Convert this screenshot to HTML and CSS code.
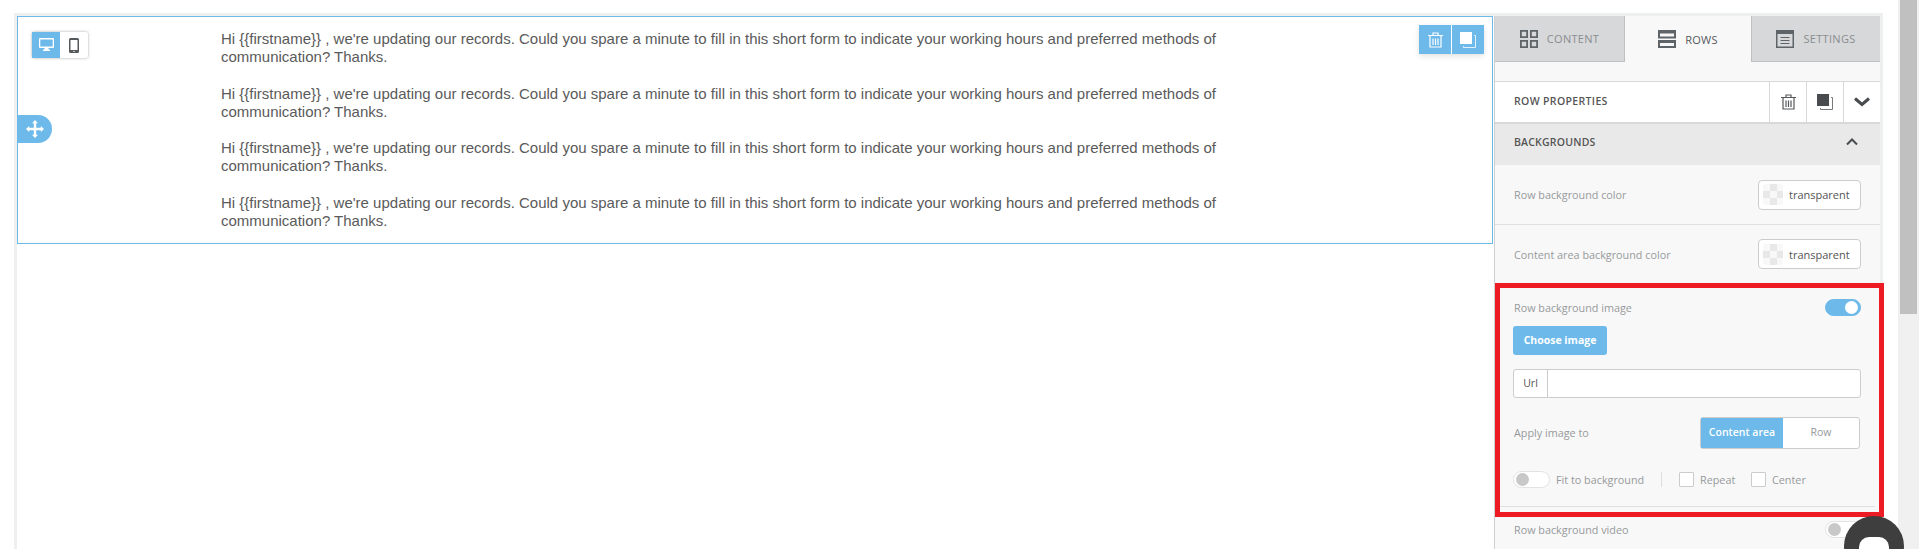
FILE: index.html
```html
<!DOCTYPE html>
<html lang="en">
<head>
    <meta charset="UTF-8">
    <title>Row properties</title>
    <link rel="stylesheet" href="styles.css">
</head>
<body>
    <div class="workspace">
        <div class="stage">
            <div class="row-box">
                <div class="device-toggle">
                    <span class="device active">
                        <svg width="15" height="14" viewBox="0 0 15 14"><path fill="#fff" d="M1 0h13a1 1 0 0 1 1 1v8a1 1 0 0 1-1 1H9.500v1.500H11V13H4v-1.500h1.500V10H1a1 1 0 0 1-1-1V1a1 1 0 0 1 1-1zm.3 1.500v7h12.400v-7z"/></svg>
                    </span>
                    <span class="device">
                        <svg width="10" height="15" viewBox="0 0 10 15"><path fill="#55595c" d="M1.500 0h7A1.500 1.500 0 0 1 10 1.500v12A1.500 1.500 0 0 1 8.500 15h-7A1.500 1.500 0 0 1 0 13.500v-12A1.500 1.500 0 0 1 1.500 0zm0 2v10h7V2zM5 12.700a.7.7 0 1 0 0 1.400.7.7 0 0 0 0-1.400z"/></svg>
                    </span>
                </div>
                <div class="move-handle">
                    <svg width="18" height="18" viewBox="0 0 18 18"><path fill="#fff" d="M9 0l3 3.200h-1.800v4.600h4.600V6L18 9l-3.200 3v-1.800h-4.600v4.600H12L9 18l-3-3.200h1.800v-4.600H3.200V12L0 9l3.200-3v1.800h4.600V3.200H6z"/></svg>
                </div>
                <div class="row-actions">
                    <span class="row-action">
                        <svg width="15" height="16" viewBox="0 0 15 16"><path fill="none" stroke="#fff" stroke-width="1.200" d="M2 4v11h11V4M0 3.500h15M5 3V1h5v2M5 6.500V13M7.500 6.500V13M10 6.500V13"/></svg>
                    </span>
                    <span class="row-action">
                        <svg width="16" height="16" viewBox="0 0 16 16"><path fill="#fff" d="M0 0h12v12H0z"/><path fill="none" stroke="#fff" stroke-width=".8" d="M14 3.500h1.500v12h-12V14"/></svg>
                    </span>
                </div>
                <div class="row-text">
                    <p>Hi {{firstname}} , we're updating our records. Could you spare a minute to fill in this short form to indicate your working hours and preferred methods of communication? Thanks.</p>
                    <p>Hi {{firstname}} , we're updating our records. Could you spare a minute to fill in this short form to indicate your working hours and preferred methods of communication? Thanks.</p>
                    <p>Hi {{firstname}} , we're updating our records. Could you spare a minute to fill in this short form to indicate your working hours and preferred methods of communication? Thanks.</p>
                    <p>Hi {{firstname}} , we're updating our records. Could you spare a minute to fill in this short form to indicate your working hours and preferred methods of communication? Thanks.</p>
                </div>
            </div>
        </div>

        <aside class="panel">
            <div class="tabs">
                <div class="tab">
                    <svg width="18" height="18" viewBox="0 0 18 18"><path fill="none" stroke="#5f6468" stroke-width="1.800" d="M.9.900h6.200v6.200H.900zM10.900.900h6.200v6.200h-6.200zM.9 10.900h6.200v6.200H.900zM10.900 10.900h6.200v6.200h-6.200z"/></svg>
                    CONTENT
                </div>
                <div class="tab active">
                    <svg width="18" height="18" viewBox="0 0 18 18"><path fill="#5f6468" fill-rule="evenodd" d="M0 0h18v8.500H0zm2 3.500v3h14v-3zM0 10h18v8H0zm2 3v3h14v-3z"/></svg>
                    ROWS
                </div>
                <div class="tab">
                    <svg width="18" height="18" viewBox="0 0 18 18"><path fill="#5f6468" fill-rule="evenodd" d="M0 0h18v18H0zm1.500 4v12.500h15V4zM4.500 7h9v1h-9zM4.500 10h9v1h-9zM4.500 13h9v1h-9z"/></svg>
                    SETTINGS
                </div>
            </div>
            <div class="tab-gap"></div>

            <div class="props-head">
                <span class="props-title">ROW PROPERTIES</span>
                <span class="props-btn">
                    <svg width="15" height="16" viewBox="0 0 15 16"><path fill="none" stroke="#55595c" stroke-width="1.200" d="M2 4v11h11V4M0 3.500h15M5 3V1h5v2M5 6.500V13M7.500 6.500V13M10 6.500V13"/></svg>
                </span>
                <span class="props-btn">
                    <svg width="16" height="16" viewBox="0 0 16 16"><path fill="#484c4f" d="M0 0h12v12H0z"/><path fill="none" stroke="#55595c" stroke-width=".8" d="M14 3.500h1.500v12h-12V14"/></svg>
                </span>
                <span class="props-btn">
                    <svg width="16" height="10" viewBox="0 0 16 10"><path fill="none" stroke="#484c4f" stroke-width="3" d="M1 1.500l7 6 7-6"/></svg>
                </span>
            </div>

            <div class="section-head">
                <span>BACKGROUNDS</span>
                <svg width="12" height="8" viewBox="0 0 12 8"><path fill="none" stroke="#484c4f" stroke-width="2" d="M1 6.500l5-5 5 5"/></svg>
            </div>

            <div class="prop-row">
                <span class="prop-label">Row background color</span>
                <span class="color-btn"><span class="swatch"></span>transparent</span>
            </div>
            <div class="prop-row second">
                <span class="prop-label">Content area background color</span>
                <span class="color-btn"><span class="swatch"></span>transparent</span>
            </div>

            <div class="image-block">
                <div class="red-outline"></div>
                <div class="line-head">
                    <span class="prop-label">Row background image</span>
                    <span class="switch on"><span class="knob"></span></span>
                </div>
                <span class="choose-btn">Choose image</span>
                <div class="url-field">
                    <span class="url-label">Url</span>
                    <span class="url-input"></span>
                </div>
                <div class="apply-line">
                    <span class="prop-label">Apply image to</span>
                    <div class="segment">
                        <span class="seg active">Content area</span>
                        <span class="seg">Row</span>
                    </div>
                </div>
                <div class="fit-line">
                    <span class="switch small"><span class="knob"></span></span>
                    <span class="prop-label fit-label">Fit to background</span>
                    <span class="divider"></span>
                    <span class="check"></span>
                    <span class="prop-label check-label">Repeat</span>
                    <span class="check"></span>
                    <span class="prop-label">Center</span>
                </div>
                <div class="block-rule"></div>
            </div>

            <div class="line-head video-line">
                <span class="prop-label">Row background video</span>
                <span class="switch"><span class="knob"></span></span>
            </div>
        </aside>
    </div>

    <div class="scrollbar"><div class="thumb"></div></div>

    <div class="chat-bubble"><span class="chat-shape"></span></div>
</body>
</html>
```

FILE: styles.css
```css
html, body {
    height: 549px;
    margin: 0;
    overflow: hidden;
    background-color: #fff;
}
body {
    font-family: "Open Sans", sans-serif;
    display: flex;
    position: relative;
}
.workspace {
    display: flex;
    width: 1863px;
    height: 536px;
    margin: 13px 0 0 14px;
    border: 3px solid #eef0f0;
    border-bottom: none;
}
.stage {
    width: 1477px;
    flex-shrink: 0;
}
.row-box {
    position: relative;
    height: 228px;
    box-sizing: border-box;
    border: 1px solid #6cb9ea;
    padding: 13px 0 0 203px;
    margin-right: 1px;
}
.row-text {
    width: 1020px;
    font-family: "Liberation Sans", Arial, sans-serif;
    font-size: 15px;
    line-height: 18.2px;
    color: #5a5a5a;
}
.row-text p {
    margin: 0 0 18.2px;
}
.device-toggle {
    position: absolute;
    top: 15px;
    left: 14px;
    display: flex;
    height: 26px;
    background: #fff;
    border-radius: 2px;
    box-shadow: 0 0 3px rgba(0, 0, 0, 0.35);
}
.device {
    width: 28px;
    display: flex;
    align-items: center;
    justify-content: center;
}
.device.active {
    background-color: #6cb9ea;
}
.move-handle {
    position: absolute;
    top: 98px;
    left: -1px;
    width: 35px;
    height: 28px;
    background-color: #6cb9ea;
    border-radius: 0 14px 14px 0;
    display: flex;
    align-items: center;
    justify-content: center;
}
.row-actions {
    position: absolute;
    top: 8px;
    right: 8px;
    display: flex;
    gap: 1px;
    box-shadow: 0 2px 6px rgba(0, 0, 0, 0.12);
}
.row-action {
    width: 32px;
    height: 29px;
    background-color: #6cb9ea;
    display: flex;
    align-items: center;
    justify-content: center;
}
.panel {
    width: 386px;
    flex-shrink: 0;
    background-color: #f8f8f8;
    border-left: 1px solid #cfd0d2;
    box-sizing: border-box;
}
.tabs {
    display: flex;
    height: 46px;
}
.tab {
    width: 128px;
    box-sizing: border-box;
    display: flex;
    align-items: center;
    justify-content: center;
    gap: 9px;
    background-color: #d7d8da;
    border-bottom: 1px solid #bfc0c2;
    color: #8a8d90;
    font-size: 11px;
    letter-spacing: 0.3px;
}
.tab:first-child {
    width: 129px;
}
.tab.active {
    background-color: #f8f8f8;
    border: 1px solid #bfc0c2;
    border-width: 0 1px;
    color: #55595c;
}
.tab-gap {
    height: 19px;
    border-bottom: 1px solid #d8d8d8;
    box-shadow: 0 1px 3px rgba(0, 0, 0, 0.04);
}
.props-head {
    display: flex;
    height: 40px;
    background-color: #fff;
    border-bottom: 2px solid #d8d8d8;
    align-items: stretch;
}
.props-title {
    flex: 1;
    padding-left: 19px;
    font-size: 10.500px;
    font-weight: 600;
    letter-spacing: 0.35px;
    color: #555;
    line-height: 38px;
}
.props-btn {
    width: 36px;
    border-left: 1px solid #d8d8d8;
    display: flex;
    align-items: center;
    justify-content: center;
}
.section-head {
    height: 41px;
    box-sizing: border-box;
    padding: 0 22px 5px 19px;
    background-color: #e9e9e9;
    display: flex;
    align-items: center;
    justify-content: space-between;
    font-size: 10.500px;
    font-weight: 600;
    letter-spacing: 0.2px;
    color: #555;
}
.prop-row {
    height: 59px;
    display: flex;
    align-items: center;
    justify-content: space-between;
    padding: 0 19px;
    border-bottom: 1px solid #dfe0e4;
}
.prop-row.second {
    height: 58px;
    border-bottom: none;
}
.prop-label {
    font-size: 10.800px;
    color: #979a9c;
}
.color-btn {
    width: 103px;
    height: 30px;
    box-sizing: border-box;
    border: 1px solid #ccc;
    border-radius: 4px;
    background-color: #fff;
    display: flex;
    align-items: center;
    gap: 6px;
    padding-left: 4px;
    font-size: 11px;
    color: #555;
}
.swatch {
    width: 20px;
    height: 21px;
    border-radius: 3px;
    background-color: #f8f8f8;
    background-image: conic-gradient(#e8e8e8 25%, #f8f8f8 0 50%, #e8e8e8 0 75%, #f8f8f8 0);
    background-size: 14px 14px;
}
.image-block {
    position: relative;
    height: 233px;
    box-sizing: border-box;
    padding: 16px 19px 0 18px;
}
.red-outline {
    position: absolute;
    top: 0;
    left: 0;
    right: -4px;
    bottom: -1px;
    border: 5px solid #ed1c24;
}
.line-head {
    display: flex;
    align-items: center;
    justify-content: space-between;
    height: 17px;
    margin-left: 1px;
}
.switch {
    width: 36px;
    height: 17px;
    box-sizing: border-box;
    border: 1px solid #e2e2e2;
    border-radius: 9px;
    background-color: #fff;
    display: flex;
    align-items: center;
    padding: 0 2px;
}
.switch .knob {
    width: 13px;
    height: 13px;
    border-radius: 50%;
    background-color: #c8c8c8;
}
.switch.on {
    background-color: #6cb9ea;
    border-color: #6cb9ea;
    justify-content: flex-end;
}
.switch.on .knob {
    background-color: #fff;
}
.choose-btn {
    display: block;
    width: 94px;
    height: 29px;
    margin-top: 10px;
    background-color: #6cb9ea;
    border-radius: 3px;
    color: #fff;
    font-size: 10.500px;
    font-weight: 700;
    line-height: 29px;
    text-align: center;
}
.url-field {
    display: flex;
    height: 29px;
    margin-top: 14px;
    box-sizing: border-box;
    border: 1px solid #ccc;
    border-radius: 3px;
    background-color: #fff;
}
.url-label {
    width: 33px;
    border-right: 1px solid #ccc;
    text-align: center;
    font-size: 10.500px;
    line-height: 27px;
    color: #555;
}
.url-input {
    flex: 1;
}
.apply-line {
    display: flex;
    align-items: center;
    justify-content: space-between;
    height: 32px;
    margin: 19px 1px 0 1px;
}
.apply-line .prop-label {
    margin-bottom: 2px;
}
.segment {
    display: flex;
    width: 160px;
    height: 32px;
    box-sizing: border-box;
    border: 1px solid #ccc;
    border-radius: 3px;
    background-color: #fff;
}
.seg {
    flex: 1;
    text-align: center;
    font-size: 10.500px;
    line-height: 29px;
    color: #979a9c;
}
.seg.active {
    flex: none;
    width: 82px;
    background-color: #6cb9ea;
    color: #fff;
    font-weight: 600;
}
.fit-line {
    display: flex;
    align-items: center;
    height: 17px;
    margin-top: 22px;
}
.fit-line .prop-label {
    margin-bottom: 1px;
}
.switch.small {
    width: 37px;
}
.fit-label {
    margin-left: 6px;
    width: 105px;
}
.divider {
    width: 1px;
    height: 15px;
    background-color: #dedede;
    margin-right: 17px;
}
.check {
    width: 13px;
    height: 13px;
    border: 1px solid #ccc;
    border-radius: 1px;
    background-color: #fff;
    margin-right: 6px;
}
.check-label {
    width: 51px;
}
.block-rule {
    height: 1px;
    margin: 18px -14px 0 -13px;
    background-color: #dfe0e4;
}
.video-line {
    margin: 5px 19px 0 19px;
    height: 17px;
}
.scrollbar {
    position: absolute;
    top: 0;
    left: 1898px;
    width: 21px;
    height: 549px;
    background-color: #f0f0f0;
}
.thumb {
    width: 17px;
    height: 314px;
    margin-left: 2px;
    background-color: #c0c0c0;
}
.chat-bubble {
    position: absolute;
    top: 516px;
    left: 1844px;
    width: 60px;
    height: 60px;
    border-radius: 50%;
    background-color: #3e3e3e;
}
.chat-shape {
    position: absolute;
    top: 21px;
    left: 15px;
    width: 30px;
    height: 22px;
    border-radius: 10px;
    background-color: #fff;
}
```
